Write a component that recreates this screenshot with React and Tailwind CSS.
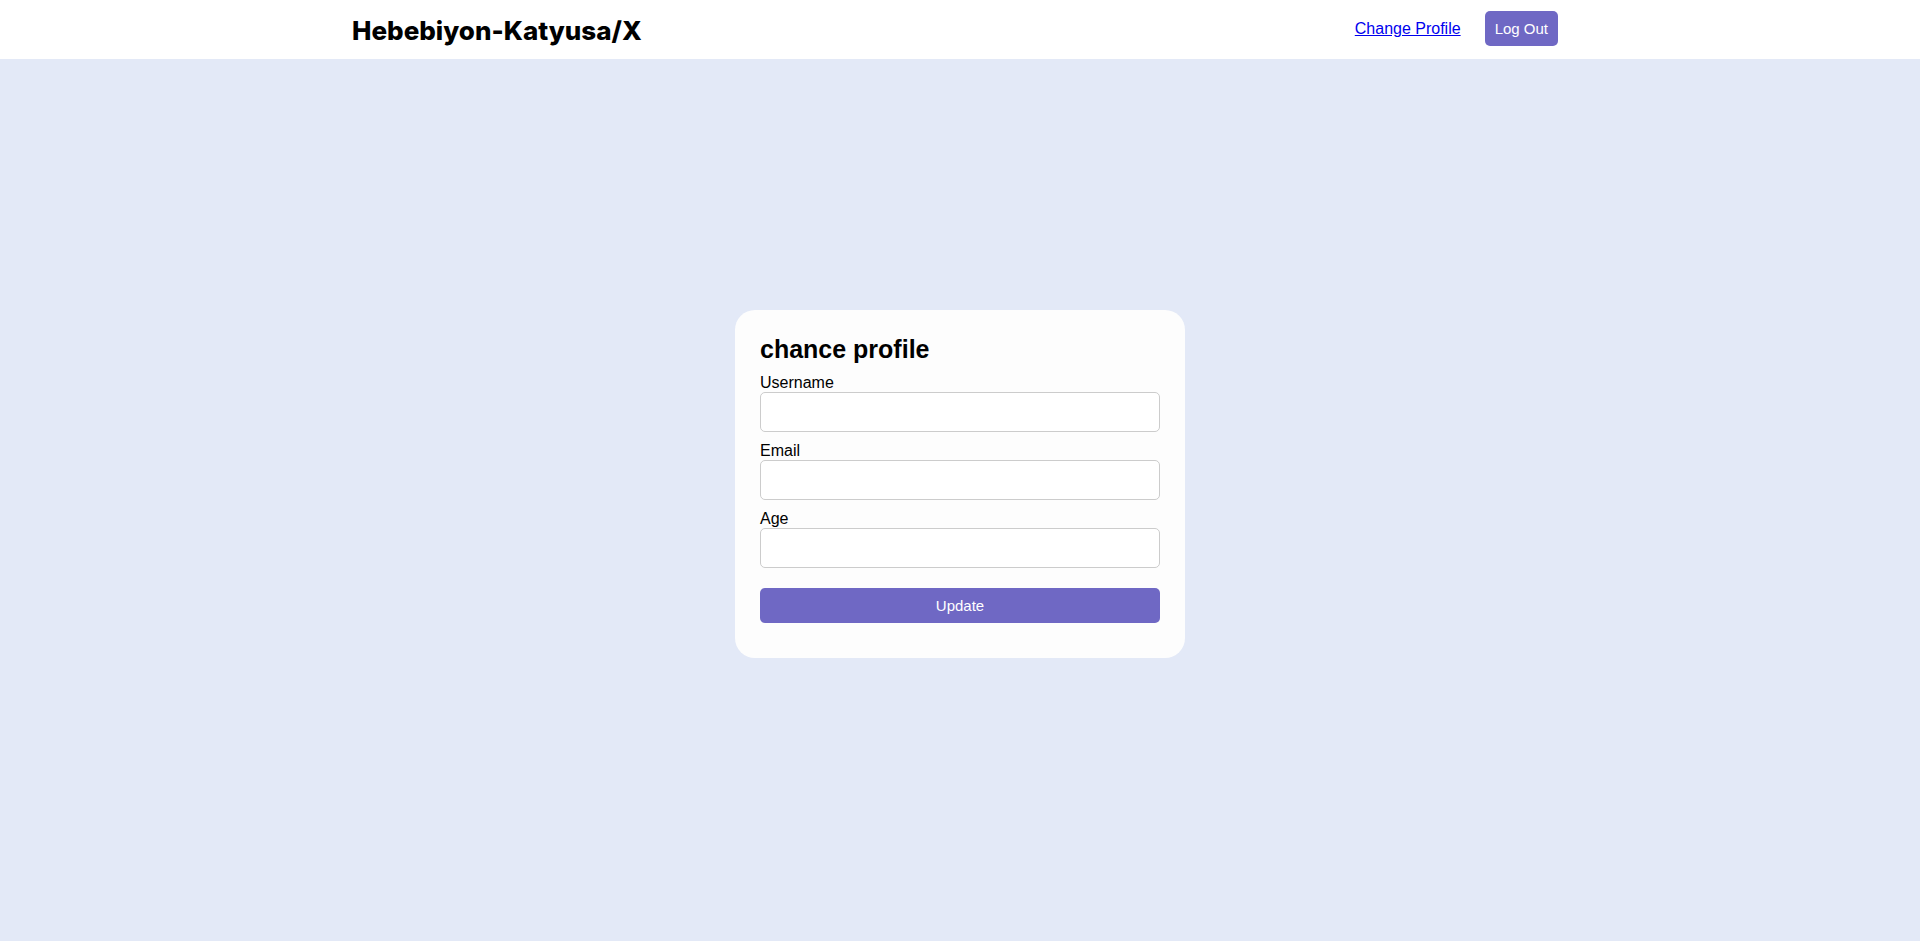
const fields = [
  { id: 'username', label: 'Username', type: 'text' },
  { id: 'email', label: 'Email', type: 'email' },
  { id: 'age', label: 'Age', type: 'text' },
];

function Header() {
  return (
    <header className="bg-white">
      <div className="mx-auto flex max-w-[1216px] items-start justify-between pt-[11px] pr-[10px] pb-[9px]">
        <h1 className="font-[Inter,Arial,sans-serif] text-[26px] leading-[39px] font-extrabold text-black">Hebebiyon-Katyusa/X</h1>
        <nav className="flex items-center gap-6">
          <a href="#profile" className="text-base text-[#0000ee] underline">
            Change Profile
          </a>
          <button type="button" className="h-[35px] rounded-[5px] bg-[#6f68c4] px-[10px] pt-px text-[15px] text-white">
            Log Out
          </button>
        </nav>
      </div>
    </header>
  );
}

function ProfileForm() {
  return (
    <form
      id="profile"
      className="w-full max-w-[450px] rounded-[20px] bg-[#fdfdfd] px-[25px] pt-[25px] pb-[35px]"
      onSubmit={(event) => event.preventDefault()}
    >
      <h2 className="mb-[10px] text-[25px] leading-[29px] font-bold">chance profile</h2>
      <div className="flex flex-col gap-[10px]">
        {fields.map(({ id, label, type }) => (
          <div key={id} className="flex flex-col">
            <label htmlFor={id} className="text-base leading-[18px]">
              {label}
            </label>
            <input id={id} name={id} type={type} className="h-10 w-full rounded-[5px] border border-[#cccccc] bg-white px-[10px] text-base" />
          </div>
        ))}
      </div>
      <button type="submit" className="mt-5 h-[35px] w-full rounded-[5px] bg-[#6f68c4] pt-px text-[15px] text-white">
        Update
      </button>
    </form>
  );
}

export default function App() {
  return (
    <div className="flex min-h-screen flex-col bg-[#e3e9f7] font-['Liberation_Sans',Arial,sans-serif] text-black">
      <Header />
      <main className="flex flex-1 items-center justify-center pb-8">
        <ProfileForm />
      </main>
    </div>
  );
}
